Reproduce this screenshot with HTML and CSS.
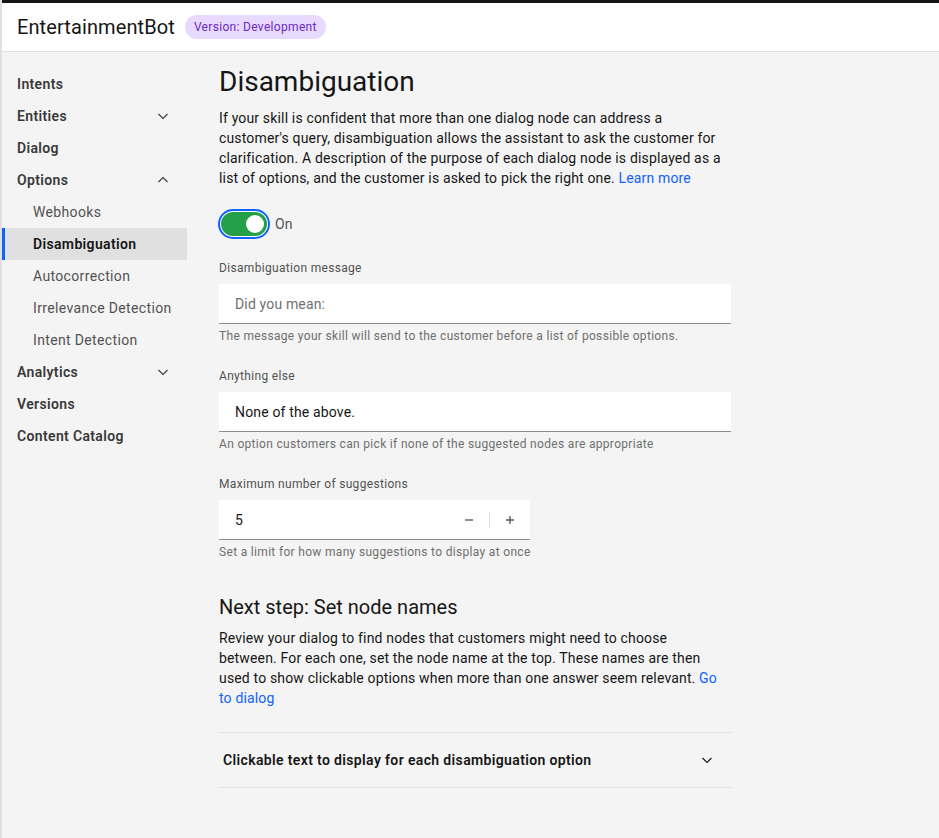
FILE: index.html
```html
<!DOCTYPE html>
<html lang="en">
<head>
<meta charset="utf-8">
<title>EntertainmentBot - Disambiguation</title>
<link rel="stylesheet" href="styles.css">
</head>
<body>
<div class="topbar"></div>
<header class="header">
  <span class="app-title">EntertainmentBot</span>
  <span class="tag">Version: Development</span>
</header>
<div class="layout">
  <nav class="sidenav">
    <div class="nav-item">Intents</div>
    <div class="nav-item">Entities
      <svg class="chev" viewBox="0 0 16 16" width="16" height="16"><path d="M3.5 6 8 10.5 12.5 6" fill="none" stroke="#393939" stroke-width="1.1"/></svg>
    </div>
    <div class="nav-item">Dialog</div>
    <div class="nav-item">Options
      <svg class="chev" viewBox="0 0 16 16" width="16" height="16"><path d="M3.5 10 8 5.5 12.5 10" fill="none" stroke="#393939" stroke-width="1.1"/></svg>
    </div>
    <div class="nav-sub">Webhooks</div>
    <div class="nav-sub active">Disambiguation</div>
    <div class="nav-sub">Autocorrection</div>
    <div class="nav-sub">Irrelevance Detection</div>
    <div class="nav-sub">Intent Detection</div>
    <div class="nav-item">Analytics
      <svg class="chev" viewBox="0 0 16 16" width="16" height="16"><path d="M3.5 6 8 10.5 12.5 6" fill="none" stroke="#393939" stroke-width="1.1"/></svg>
    </div>
    <div class="nav-item">Versions</div>
    <div class="nav-item">Content Catalog</div>
  </nav>
  <main class="main">
    <h1 class="page-title">Disambiguation</h1>
    <p class="body-text">If your skill is confident that more than one dialog node can address a customer's query, disambiguation allows the assistant to ask the customer for clarification. A description of the purpose of each dialog node is displayed as a list of options, and the customer is asked to pick the right one. <a class="link" href="#">Learn more</a></p>

    <div class="toggle-row">
      <span class="toggle"><span class="knob"></span></span>
      <span class="toggle-label">On</span>
    </div>

    <div class="field">
      <label class="label">Disambiguation message</label>
      <div class="input"><span class="placeholder">Did you mean:</span></div>
      <div class="helper">The message your skill will send to the customer before a list of possible options.</div>
    </div>

    <div class="field">
      <label class="label">Anything else</label>
      <div class="input"><span class="value">None of the above.</span></div>
      <div class="helper">An option customers can pick if none of the suggested nodes are appropriate</div>
    </div>

    <div class="field">
      <label class="label">Maximum number of suggestions</label>
      <div class="input number">
        <span class="value grow">5</span>
        <span class="num-btn"><svg viewBox="0 0 16 16" width="16" height="16"><path d="M4 8h8" stroke="#525252" stroke-width="1.3"/></svg></span>
        <span class="num-sep"></span>
        <span class="num-btn"><svg viewBox="0 0 16 16" width="16" height="16"><path d="M4 8h8M8 4v8" stroke="#525252" stroke-width="1.3"/></svg></span>
      </div>
      <div class="helper">Set a limit for how many suggestions to display at once</div>
    </div>

    <h2 class="section-title">Next step: Set node names</h2>
    <p class="body-text narrow">Review your dialog to find nodes that customers might need to choose between. For each one, set the node name at the top. These names are then used to show clickable options when more than one answer seem relevant. <a class="link" href="#">Go to dialog</a></p>

    <div class="accordion">
      <span class="acc-title">Clickable text to display for each disambiguation option</span>
      <svg class="acc-chev" viewBox="0 0 16 16" width="16" height="16"><path d="M3.5 6 8 10.5 12.5 6" fill="none" stroke="#161616" stroke-width="1.1"/></svg>
    </div>
  </main>
</div>
</body>
</html>
```
FILE: styles.css
```css
* { box-sizing: border-box; }
html, body { margin: 0; padding: 0; }
body {
  font-family: Roboto, "Noto Sans", Arial, sans-serif;
  background: #f4f4f4;
  color: #161616;
  border-left: 2px solid #e0e0e0;
  min-height: 838px;
}
.topbar { height: 3px; background: #161616; }
.header {
  height: 49px;
  background: #ffffff;
  border-bottom: 1px solid #e0e0e0;
  display: flex;
  align-items: center;
  padding-left: 15px;
  gap: 10px;
}
.app-title { font-size: 20px; color: #161616; letter-spacing: 0.1px; }
.tag {
  background: #e8daff;
  color: #6929c4;
  font-size: 12px;
  letter-spacing: 0.32px;
  height: 24px;
  line-height: 24px;
  padding: 0 9px;
  border-radius: 12px;
}
.layout { display: flex; }
.sidenav { width: 185px; padding-top: 16px; flex-shrink: 0; }
.nav-item, .nav-sub {
  height: 32px;
  display: flex;
  align-items: center;
  justify-content: space-between;
  padding: 0 16px 0 15px;
  font-size: 14px;
  letter-spacing: 0.35px;
  white-space: nowrap;
}
.nav-item { font-weight: 600; color: #393939; }
.nav-sub { padding-left: 31px; color: #525252; }
.nav-sub.active {
  background: #e0e0e0;
  border-left: 3px solid #0f62fe;
  padding-left: 28px;
  font-weight: 600;
  color: #161616;
}
.chev { display: block; }
.main { padding: 12px 32px 40px 32px; width: 576px; }
.page-title {
  font-size: 28px;
  font-weight: 400;
  line-height: 36px;
  margin: 0 0 8px 0;
}
.body-text {
  font-size: 14px;
  line-height: 20px;
  letter-spacing: 0.16px;
  margin: 0;
  color: #161616;
}
.body-text.narrow { max-width: 500px; }
.link { color: #0f62fe; text-decoration: none; }
.toggle-row { display: flex; align-items: center; margin-top: 24px; gap: 8px; }
.toggle {
  width: 46px;
  height: 24px;
  margin-left: 2px;
  border-radius: 12px;
  background: #24a148;
  box-shadow: 0 0 0 1px #ffffff, 0 0 0 3px #0f62fe;
  position: relative;
}
.knob {
  position: absolute;
  right: 3px;
  top: 3px;
  width: 18px;
  height: 18px;
  border-radius: 50%;
  background: #ffffff;
}
.toggle-label { font-size: 14px; color: #525252; letter-spacing: 0.16px; }
.field { margin-top: 24px; }
.label {
  display: block;
  font-size: 12px;
  line-height: 16px;
  letter-spacing: 0.32px;
  color: #525252;
  margin-bottom: 8px;
}
.input {
  height: 40px;
  background: #ffffff;
  border-bottom: 1px solid #8d8d8d;
  display: flex;
  align-items: center;
  padding-left: 16px;
  font-size: 14px;
  letter-spacing: 0.16px;
}
.placeholder { color: #6f6f6f; }
.value { color: #161616; }
.input.number { width: 311px; padding-right: 0; }
.grow { flex: 1; }
.num-btn { width: 40px; height: 40px; display: flex; align-items: center; justify-content: center; }
.num-sep { width: 1px; height: 16px; background: #e0e0e0; }
.helper {
  margin-top: 4px;
  font-size: 12px;
  line-height: 16px;
  letter-spacing: 0.32px;
  color: #6f6f6f;
}
.section-title {
  font-size: 20px;
  font-weight: 400;
  line-height: 28px;
  margin: 33px 0 7px 0;
}
.accordion {
  margin-top: 24px;
  border-top: 1px solid #e0e0e0;
  border-bottom: 1px solid #e0e0e0;
  height: 56px;
  display: flex;
  align-items: center;
  justify-content: space-between;
  padding: 0 16px 0 4px;
}
.acc-title { font-size: 14px; font-weight: 600; letter-spacing: 0.36px; color: #161616; }
.acc-chev { display: block; }
```
